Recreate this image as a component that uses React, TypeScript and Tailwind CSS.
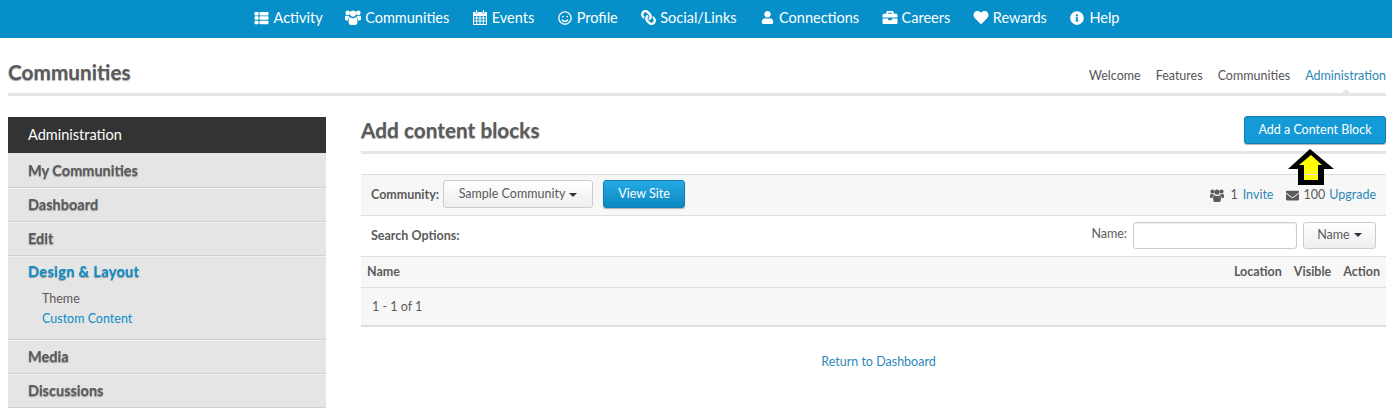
import { FaThList, FaRegSmile, FaLink, FaUser, FaBriefcase, FaHeart, FaInfoCircle, FaEnvelope } from 'react-icons/fa';

function UsersIcon({ className }: { className?: string }) {
  return (
    <svg className={className} viewBox="0 0 16 15" fill="currentColor">
      <circle cx="8" cy="3.6" r="3.1" />
      <circle cx="2.7" cy="2.9" r="2.3" />
      <circle cx="13.3" cy="2.9" r="2.3" />
      <path d="M3.6 9c0-1 .7-1.8 1.6-1.8 .8.6 1.8 1 2.8 1s2-.4 2.8-1c.9 0 1.6.8 1.6 1.8v3.6c0 1.3-1 2.4-2.3 2.4H5.9c-1.3 0-2.3-1.1-2.3-2.4z" />
      <path d="M0 7.2c0-1 .5-1.8 1.3-1.8 .4.4 1 .6 1.5.6 .5 0 .9-.1 1.2-.3 .1.5.3.9.6 1.2-1 .5-1.7 1.6-1.7 2.9v.6H1.2C.5 10.4 0 9.9 0 9.2z" />
      <path d="M16 7.2c0-1-.5-1.8-1.3-1.8-.4.4-1 .6-1.5.6-.5 0-.9-.1-1.2-.3-.1.5-.3.9-.6 1.2 1 .5 1.7 1.6 1.7 2.9v.6h1.7c.7 0 1.2-.5 1.2-1.2z" />
    </svg>
  );
}

function CalendarIcon({ className }: { className?: string }) {
  return (
    <svg className={className} viewBox="0 0 14 15" fill="currentColor">
      <path fillRule="evenodd" d="M1 2h1.5v1.6h2V2h5v1.6h2V2H13c.6 0 1 .4 1 1v11c0 .6-.4 1-1 1H1c-.6 0-1-.4-1-1V3c0-.6.4-1 1-1zM1 6v1.6h2.2V6zm3.2 0v1.6h2.3V6zm3.3 0v1.6h2.3V6zm3.3 0v1.6H13V6zM1 8.6v1.8h2.2V8.6zm3.2 0v1.8h2.3V8.6zm3.3 0v1.8h2.3V8.6zm3.3 0v1.8H13V8.6zM1 11.4V14h2.2v-2.6zm3.2 0V14h2.3v-2.6zm3.3 0V14h2.3v-2.6zm3.3 0V14H13v-2.6z" />
      <rect x="3" y="0" width="1" height="3" />
      <rect x="10" y="0" width="1" height="3" />
    </svg>
  );
}

const navItems = [
  { label: 'Activity', icon: <FaThList className="w-[15px] h-[14px]" /> },
  { label: 'Communities', icon: <UsersIcon className="w-[16px] h-[15px]" /> },
  { label: 'Events', icon: <CalendarIcon className="w-[14px] h-[15px]" /> },
  { label: 'Profile', icon: <FaRegSmile className="w-[14px] h-[14px]" /> },
  { label: 'Social/Links', icon: <FaLink className="w-[15px] h-[15px] -scale-x-100" /> },
  { label: 'Connections', icon: <FaUser className="w-[13px] h-[13px]" /> },
  { label: 'Careers', icon: <FaBriefcase className="w-[16px] h-[15px]" /> },
  { label: 'Rewards', icon: <FaHeart className="w-[16px] h-[15px]" /> },
  { label: 'Help', icon: <FaInfoCircle className="w-[14px] h-[14px]" /> },
];

const shadow = '[text-shadow:0_1px_1px_rgba(0,0,0,0.35)]';
const divider = 'border-b border-b-[#f2f2f2] shadow-[inset_0_-1px_0_#d0d0d0]';

function SideItem({ label }: { label: string }) {
  return (
    <div className={`h-[34px] pb-[2px] pl-5 flex items-center text-[14.5px] font-bold text-[#5b5b5b] ${divider} ${shadow}`}>
      {label}
    </div>
  );
}

function Caret() {
  return <span className="inline-block ml-1 align-middle border-x-4 border-x-transparent border-t-4 border-t-[#333]"></span>;
}

export default function App() {
  return (
    <div className="relative w-[1392px] h-[408px] overflow-hidden bg-white text-[#5b5b5b] font-['Lato',sans-serif] text-[12.5px]">
      <div className="h-[38px] pb-[3px] pr-[19px] bg-[#078fc9] flex justify-center items-center gap-[22.5px] text-white text-[14.5px]">
        {navItems.map(item => (
          <div key={item.label} className="flex items-center gap-[4px]">
            <span className="w-[16px] flex justify-center">{item.icon}</span>
            <span>{item.label}</span>
          </div>
        ))}
      </div>

      <div className="px-[6px] pl-2">
        <div className="h-[58px] flex justify-between items-end border-b-[3px] border-b-[#e5e5e5]">
          <h1 className={`text-[20.8px] font-bold pb-[8px] leading-none mb-[2px] ${shadow}`}>Communities</h1>
          <div className="flex gap-[15px] pb-[11px] leading-none text-[#555]">
            <span>Welcome</span>
            <span>Features</span>
            <span>Communities</span>
            <span className="relative text-[#2d88b8]">
              Administration
              <span className="absolute left-1/2 -ml-[4px] -bottom-[11px] border-x-4 border-x-transparent border-b-4 border-b-[#e5e5e5]"></span>
            </span>
          </div>
        </div>

        <div className="flex mt-[21px]">
          <div className="w-[318px] shrink-0 bg-[#e5e5e5]">
            <div className="h-[36px] pb-[1px] pl-5 flex items-center bg-[#333] text-white text-[14.5px]">Administration</div>
            <div className="h-[2px]"></div>
            <SideItem label="My Communities" />
            <SideItem label="Dashboard" />
            <SideItem label="Edit" />
            <div className={`h-[84px] pl-5 ${divider}`}>
              <div className={`h-[30px] mb-[2px] flex items-center text-[14.5px] font-bold tracking-[0.35px] text-[#0a8dc8] ${shadow}`}>Design &amp; Layout</div>
              <div className="pl-[14px] leading-[20px]">
                <div>Theme</div>
                <div className="text-[#0a8dc8]">Custom Content</div>
              </div>
            </div>
            <SideItem label="Media" />
            <SideItem label="Discussions" />
          </div>

          <div className="flex-1 ml-[35px] -mt-[1px]">
            <div className="h-[38px] flex justify-between border-b-[3px] border-b-[#e5e5e5]">
              <h2 className={`text-[20.8px] font-bold leading-none pt-[4px] ${shadow}`}>Add content blocks</h2>
              <button className="w-[142px] h-[28px] rounded-[3px] bg-[#149ad6] border border-[#0f7fb3] text-white shadow-[0_1px_1px_rgba(0,0,0,0.3)]">Add a Content Block</button>
            </div>

            <div className="mt-[20px] h-[42px] bg-[#f7f7f7] border-y border-y-[#dedede] flex items-center pl-[10px] pr-[10px]">
              <span className="font-bold mr-[4px]">Community:</span>
              <button className="-mt-[3px] pt-[2px] w-[150px] h-[28px] rounded-[3px] border border-[#ccc] bg-gradient-to-b from-white to-[#eeeeee] mr-[10px]">Sample Community<Caret /></button>
              <button className="-mt-[3px] pt-[2px] w-[82px] h-[28px] rounded-[3px] bg-gradient-to-b from-[#25a9e4] to-[#0a88c0] border border-[#0f7fb3] text-white shadow-[0_1px_1px_rgba(0,0,0,0.3)]">View Site</button>
              <div className="ml-auto flex items-center">
                <UsersIcon className="w-[14px] h-[13px] mr-[6px]" />
                <span>1</span>
                <span className="text-[#2d88b8] ml-[5px]">Invite</span>
                <FaEnvelope className="w-[13px] h-[13px] ml-[13px] mr-[4px]" />
                <span>100</span>
                <span className="text-[#2d88b8] ml-[4px]">Upgrade</span>
              </div>
            </div>

            <div className="h-[41px] border-b border-b-[#dedede] flex items-center pl-[10px] pr-[10px]">
              <span className="font-bold">Search Options:</span>
              <div className="ml-auto flex items-center -mt-[2px]">
                <span className="mr-[6px] -mt-[1px]">Name:</span>
                <div className="w-[164px] h-[27px] rounded-[3px] border border-[#ccc] bg-white shadow-[inset_0_1px_1px_rgba(0,0,0,0.08)]"></div>
                <button className="w-[73px] h-[27px] ml-[6px] rounded-[3px] border border-[#ccc] bg-gradient-to-b from-white to-[#eeeeee]">Name<Caret /></button>
              </div>
            </div>

            <div className="h-[31px] bg-[#f7f7f7] border-b border-b-[#dedede] flex items-center pl-[6px] pr-[6px] font-bold">
              <span>Name</span>
              <span className="ml-auto">Location</span>
              <span className="ml-[12px]">Visible</span>
              <span className="ml-[12px]">Action</span>
            </div>

            <div className="h-[39px] pt-[1px] bg-[#f7f7f7] border-b-2 border-b-[#dedede] flex items-center pl-[11px]">1 - 1 of 1</div>

            <div className="mt-[26px] pl-[10px] text-center text-[#2d88b8]">Return to Dashboard</div>
          </div>
        </div>
      </div>

      {/* callout arrow drawn on top of the screenshot */}
      <svg className="absolute left-[1286px] top-[147px]" width="50" height="40" viewBox="0 0 50 40">
        <polygon points="24,2 48,22 38,22 38,38 12,38 12,22 2,22" fill="#000" />
        <polygon points="25,8 36,18 32,18 32,33 18,33 18,18 13,18" fill="#ffff00" />
        <line x1="18" x2="32" y1="27.5" y2="27.5" stroke="#dedede" />
      </svg>
    </div>
  );
}
